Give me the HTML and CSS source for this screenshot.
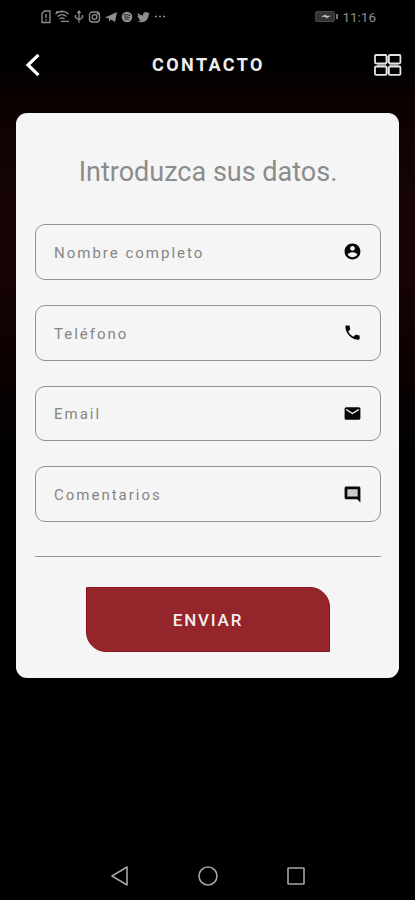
FILE: index.html
```html
<!DOCTYPE html>
<html lang="es">
<head>
    <meta charset="UTF-8">
    <meta name="viewport" content="width=device-width, initial-scale=1.0">
    <title>Contacto</title>
    <link rel="stylesheet" href="styles.css">
</head>
<body>
    <!-- Barra de estado -->
    <div class="status-bar">
        <div class="status-icons">
            <svg width="126" height="14" viewBox="0 0 126 14" fill="none" stroke="currentColor" stroke-width="1.3">
                <path d="M2 3.5 4.5 1H10v11.5H2zM6 4v4M6 9.3v1.5"/>
                <path d="M15.5 4c4-3.5 9-3.5 13 0M17.5 6.5c3-2.5 6-2.5 9 0M19.5 9c2-1.5 3.5-1.5 5 0M21 11.3h8M16 1.8h7"/>
                <path d="M39 1v11.5M35.5 5v2.5L39 10l3.5-2.5V5M37.5 3 39 1l1.5 2"/>
                <rect x="49.5" y="2" width="10" height="10" rx="3"/>
                <circle cx="54.5" cy="7" r="2.4"/>
                <circle cx="57.7" cy="4" r=".4"/>
                <path d="M65 7.5 77 2l-2 10-4-2.5-2 2V8.5z" fill="currentColor" stroke="none"/>
                <circle cx="87" cy="7" r="5.3" fill="currentColor" stroke="none"/>
                <path d="M83.7 5.2c2.4-.8 4.5-.6 6.7.5M84.2 7.3c2-.6 3.8-.4 5.5.5M84.7 9.2c1.6-.4 2.8-.3 4 .4" stroke="#111" stroke-width=".9"/>
                <path d="M97.8 3c1.5 1.6 3.1 2.3 5.2 2.4-.3-3 2.8-4.3 4.7-2.5l1.8-.6-1 1.7 1.4-.3-1.4 1.5c.1 5.7-6 9-11.2 6.1 1.6 0 2.7-.4 3.6-1.1-1.3-.2-2-.8-2.4-1.8h1c-1.3-.6-1.9-1.4-1.9-2.7l1 .3C97.6 5 97.3 4.2 97.8 3z" fill="currentColor" stroke="none"/>
                <path d="M115 6.500h2M119 6.500h2M123 6.500h2"/>
            </svg>
        </div>
        <div class="status-right">
            <svg width="24" height="11" viewBox="0 0 24 11">
                <rect x=".5" y=".5" width="19" height="10" rx="1.5" fill="#333" stroke="#484848"/>
                <path d="M6 5.5 11 3.5v1.3h5L11 7.5V6.2z" fill="#c0c0c0"/>
                <path d="M21 3h2v5h-2z" fill="#777"/>
            </svg>
            <span class="time">11:16</span>
        </div>
    </div>

    <header class="header">
        <button class="icon-btn back" aria-label="Volver">
            <svg width="18" height="24" viewBox="0 0 18 24" fill="none" stroke="#fff" stroke-width="3.2">
                <path d="M15.500 1.800 5 12l10.500 10.200"/>
            </svg>
        </button>
        <h1>CONTACTO</h1>
        <button class="icon-btn menu" aria-label="Menú">
            <svg width="28" height="22" viewBox="0 0 28 22" fill="none" stroke="#e4e4e4" stroke-width="1.8">
                <path d="M13.700 2v7M13.700 13v7M3 11h9M15.500 11h9" stroke="#888"/>
                <rect x="1" y="1" width="11.500" height="8.300" rx="1"/>
                <rect x="14.900" y="1" width="11.500" height="8.300" rx="1"/>
                <rect x="1" y="12.500" width="11.500" height="8.300" rx="1"/>
                <rect x="14.900" y="12.500" width="11.500" height="8.300" rx="1"/>
            </svg>
        </button>
    </header>

    <!-- Formulario de contacto -->
    <main>
        <form class="card">
            <h2>Introduzca sus datos.</h2>
            <div class="fields">
                <div class="field">
                    <input type="text" placeholder="Nombre completo" aria-label="Nombre completo">
                    <svg class="icon" viewBox="0 0 24 24"><path d="M12 2C6.48 2 2 6.48 2 12s4.48 10 10 10 10-4.48 10-10S17.52 2 12 2zm0 3c1.66 0 3 1.34 3 3s-1.34 3-3 3-3-1.34-3-3 1.34-3 3-3zm0 14.2c-2.5 0-4.71-1.28-6-3.22.03-1.99 4-3.08 6-3.08 1.99 0 5.97 1.09 6 3.08-1.29 1.94-3.5 3.22-6 3.22z"/></svg>
                </div>
                <div class="field">
                    <input type="tel" placeholder="Teléfono" aria-label="Teléfono">
                    <svg class="icon" viewBox="0 0 24 24"><path d="M6.62 10.79c1.44 2.83 3.76 5.14 6.59 6.59l2.2-2.2c.27-.27.67-.36 1.02-.24 1.12.37 2.33.57 3.57.57.55 0 1 .45 1 1V20c0 .55-.45 1-1 1-9.39 0-17-7.61-17-17 0-.55.45-1 1-1h3.5c.55 0 1 .45 1 1 0 1.25.2 2.45.57 3.57.11.35.03.74-.25 1.02l-2.2 2.2z"/></svg>
                </div>
                <div class="field">
                    <input type="email" placeholder="Email" aria-label="Email">
                    <svg class="icon" viewBox="0 0 24 24"><path d="M20 4H4c-1.1 0-1.99.9-1.99 2L2 18c0 1.1.9 2 2 2h16c1.1 0 2-.9 2-2V6c0-1.1-.9-2-2-2zm0 4-8 5-8-5V6l8 5 8-5v2z"/></svg>
                </div>
                <div class="field">
                    <input type="text" placeholder="Comentarios" aria-label="Comentarios">
                    <svg class="icon" viewBox="0 0 24 24"><path d="M5 5h14v10H5z" fill="#ccc"/><path d="M21.99 4c0-1.1-.89-2-1.99-2H4c-1.1 0-2 .9-2 2v12c0 1.1.9 2 2 2h14l4 4-.01-18zM18.5 14.5h-13v-9h13z"/></svg>
                </div>
            </div>
            <hr>
            <button type="button" class="submit-btn">ENVIAR</button>
        </form>
    </main>

    <!-- Barra de navegación -->
    <nav class="nav-bar">
        <svg width="20" height="22" viewBox="0 0 20 22"><path d="M2 11 17 2v18z"/></svg>
        <svg width="22" height="22" viewBox="0 0 22 22"><circle cx="11" cy="11" r="9"/></svg>
        <svg width="20" height="22" viewBox="0 0 20 22"><rect x="2" y="3" width="16" height="16" rx=".5"/></svg>
    </nav>
</body>
</html>
```

FILE: styles.css
```css
* {
    margin: 0;
    padding: 0;
    box-sizing: border-box;
}

body {
    font-family: Roboto, sans-serif;
    background: #000 linear-gradient(#000 0, #000 65px, #0b0101 100px, #160405 200px, #160304 280px, #0c0101 360px, #000 460px) no-repeat;
    height: 100vh;
    display: flex;
    flex-direction: column;
    overflow: hidden;
}

.status-bar {
    height: 34px;
    padding: 0 39px 1px 40px;
    display: flex;
    align-items: center;
    justify-content: space-between;
    color: #8e8e8e;
}

.status-icons svg,
.status-right svg {
    display: block;
}

.status-right {
    display: flex;
    align-items: center;
    gap: 3px;
}

.time {
    font-size: 13.5px;
    font-weight: 400;
    line-height: 16px;
}

.header {
    height: 61px;
    padding: 0 13px 0 23px;
    display: grid;
    grid-template-columns: 30px 1fr 38px;
    align-items: center;
}

.icon-btn {
    display: flex;
    background: none;
    border: none;
    cursor: pointer;
}

.menu {
    justify-content: flex-end;
}

h1 {
    color: #eee;
    font-size: 18px;
    font-weight: 700;
    letter-spacing: 2.4px;
    text-align: center;
}

main {
    flex: 1;
    padding: 18px 16px 0;
}

.card {
    height: 565px;
    background: #f5f5f5;
    border-radius: 11px;
    padding: 42px 18px 0 19px;
}

h2 {
    color: #8c8c8c;
    font-size: 27px;
    font-weight: 400;
    line-height: 35px;
    text-align: center;
    margin-bottom: 34px;
}

.fields {
    display: grid;
    gap: 25px;
}

.field {
    height: 55.8px;
    padding: 0 18px;
    display: flex;
    align-items: center;
    border: 1px solid #8f9193;
    border-radius: 10px;
}

input {
    flex: 1;
    min-width: 0;
    padding-top: 2px;
    border: none;
    outline: none;
    background: transparent;
    font-family: inherit;
    font-size: 15px;
    letter-spacing: 2px;
    color: #333;
}

input::placeholder {
    color: #858585;
    opacity: 1;
}

.icon {
    width: 19px;
    height: 19px;
    fill: #080808;
}

hr {
    border: none;
    height: 1px;
    background: #999;
    margin: 34px 0 30px;
}

.submit-btn {
    display: block;
    width: 244px;
    height: 65px;
    margin: 0 auto;
    background: #94252b;
    border: 1px solid #8a141b;
    border-radius: 0 20px 0 20px;
    color: #f5eeee;
    font-family: inherit;
    font-size: 17px;
    font-weight: 500;
    letter-spacing: 1.8px;
    cursor: pointer;
}

.nav-bar {
    height: 48px;
    padding: 0 109px 0 110px;
    display: flex;
    align-items: center;
    justify-content: space-between;
}

.nav-bar svg {
    fill: none;
    stroke: #a5a5a5;
    stroke-width: 1.6;
    stroke-linejoin: round;
}
```
